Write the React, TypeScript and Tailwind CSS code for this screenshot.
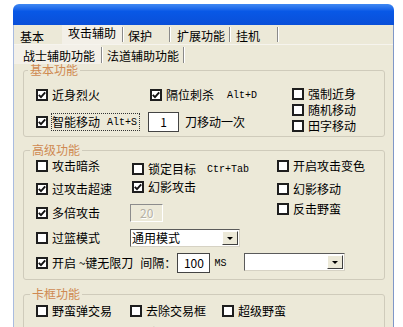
import React from 'react'

const MONO = "font-['Liberation_Mono',monospace]"

function Cb({ on }: { on?: boolean }) {
  return (
    <span className="w-[12px] h-[12px] border-2 border-[#1e1e1e] bg-white flex items-center justify-center shrink-0">
      {on && (
        <svg width="8" height="8" viewBox="0 0 8 8">
          <path d="M0.8 3.8 L3 6.2 L7.2 1.4" fill="none" stroke="#111" strokeWidth="1.9" />
        </svg>
      )}
    </span>
  )
}

function Item({ on, label, className = '', small }: { on?: boolean; label: string; className?: string; small?: boolean }) {
  return (
    <div className={`flex items-center gap-[4px] ${small ? 'h-[15px]' : 'h-[20px]'} ${className}`}>
      <Cb on={on} />
      <span className="leading-[14px] whitespace-nowrap">{label}</span>
    </div>
  )
}

function Sep({ h = 'h-[15px]' }: { h?: string }) {
  return <span className={`w-[2px] ${h} border-l border-l-[#8a8a8a] border-r border-r-white shrink-0`} />
}

function Combo({ text, className = '' }: { text?: string; className?: string }) {
  return (
    <div className={`flex items-center h-[18px] bg-white border border-t-[#5a5a5a] border-l-[#5a5a5a] border-r-[#d6d2c4] border-b-[#d6d2c4] ${className}`}>
      <span className="pl-[1px] leading-[14px] whitespace-nowrap">{text}</span>
      <span className="ml-auto mr-[1px] w-[16px] h-[14px] bg-[#ECE9D8] border border-t-white border-l-white border-r-[#404040] border-b-[#404040] flex items-center justify-center">
        <span className="border-x-[3px] border-x-transparent border-t-[3px] border-t-black" />
      </span>
    </div>
  )
}

export default function App() {
  return (
    <div className="w-[403px] h-[327px] overflow-hidden bg-white pl-[13px] pt-[4px] text-[12px] text-black font-['Noto_Sans_CJK_SC','Noto_Sans',sans-serif]">
      <div className="w-[381px] flex flex-col">
        {/* title bar */}
        <div className="h-[21px] rounded-t-[6px] bg-linear-to-b from-[#3f88f2] via-[#0858e6] via-35% to-[#0a4fd8]" />

        <div className="bg-[#ECE9D8] border-x border-l-[#a9bce0] border-r-[#7f97c8] h-[400px]">
          {/* tab row 1 */}
          <div className="flex items-center h-[19px]">
            <div className="w-[48px] pl-[6px] h-full flex items-center"><span className="translate-y-[1.5px] leading-[14px]">基本</span></div>
            <div className="w-[60px] pl-[6px] h-full flex items-center bg-[#f3f0e8]"><span className="-translate-y-[2px] leading-[14px]">攻击辅助</span></div>
            <Sep />
            <div className="w-[45px] pl-[4px] h-full flex items-center"><span className="translate-y-[1px] leading-[14px]">保护</span></div>
            <Sep />
            <div className="w-[58px] pl-[6px] h-full flex items-center"><span className="translate-y-[1px] leading-[14px]">扩展功能</span></div>
            <Sep />
            <div className="w-[46px] pl-[5px] h-full flex items-center"><span className="translate-y-[1px] leading-[14px]">挂机</span></div>
            <Sep />
          </div>

          {/* tab row 2 */}
          <div className="flex items-center h-[20px] border-t border-t-[#f6f4ee]">
            <div className="w-[87px] pl-[9px] h-full flex items-center bg-[#f3f0e8]"><span className="translate-y-[1px] leading-[14px]">战士辅助功能</span></div>
            <Sep h="h-[16px]" />
            <div className="w-[80px] pl-[4px] h-full flex items-center"><span className="translate-y-[1px] leading-[14px]">法道辅助功能</span></div>
            <Sep h="h-[16px]" />
          </div>

          {/* 基本功能 */}
          <fieldset className="ml-[9px] mr-[8px] border border-[#cfcbbb] rounded-[3px] pb-[3px]">
            <legend className="ml-[4px] px-[2px] leading-[12px] text-[#cf8a52]">基本功能</legend>
            <div className="flex pl-[12px]">
              <div className="w-[256px] flex flex-col pt-[9px] gap-[7px]">
                <div className="flex items-center h-[20px]">
                  <Item on label="近身烈火" className="w-[114px]" />
                  <Item on label="隔位刺杀" className="gap-[3px]" />
                  <span className={`${MONO} text-[10px] ml-[13px]`}>Alt+D</span>
                </div>
                <div className="flex items-center h-[20px]">
                  <Cb on />
                  <div className="ml-[3px] w-[89px] h-[18px] border border-dotted border-[#333] flex items-center">
                    <span className="leading-[14px]">智能移动</span>
                    <span className={`${MONO} text-[10px] ml-[7px]`}>Alt+S</span>
                  </div>
                  <div className="ml-[8px] w-[31px] h-[20px] bg-white border border-[#444] flex items-center justify-center leading-[14px]">1</div>
                  <span className="ml-[6px] leading-[14px]">刀移动一次</span>
                </div>
              </div>
              <div className="flex flex-col pt-[10px] gap-[1px]">
                <Item small label="强制近身" />
                <Item small label="随机移动" />
                <Item small label="田字移动" />
              </div>
            </div>
          </fieldset>

          {/* 高级功能 */}
          <fieldset className="mt-[7px] ml-[9px] mr-[8px] border border-[#cfcbbb] rounded-[3px] pb-[6px]">
            <legend className="ml-[6px] px-[2px] leading-[12px] text-[#cf8a52]">高级功能</legend>
            <div className="pl-[12px]">
              <div className="flex">
                <div className="w-[241px] flex flex-col">
                  <div className="flex items-center h-[20px]">
                    <Item label="攻击暗杀" className="w-[96px]" />
                    <Item label="锁定目标" className="translate-y-[3px]" />
                    <span className={`${MONO} text-[10px] ml-[11px] translate-y-[3px]`}>Ctr+Tab</span>
                  </div>
                  <div className="flex items-center h-[20px] mt-[3px]">
                    <Item on label="过攻击超速" className="w-[96px]" />
                    <Item on label="幻影攻击" className="-translate-y-[2px]" />
                  </div>
                  <div className="flex items-center h-[20px] mt-[4px]">
                    <Item on label="多倍攻击" className="w-[94px]" />
                    <div className="w-[33px] h-[18px] bg-[#ECE9D8] border border-t-[#8c8c8c] border-l-[#8c8c8c] border-r-white border-b-white pl-[9px] flex items-center leading-[14px] text-[#b4b1a6] [text-shadow:1px_1px_0_#fff]">20</div>
                  </div>
                  <div className="flex items-center h-[20px] mt-[5px]">
                    <Item label="过篮模式" className="w-[94px]" />
                    <Combo text="通用模式" className="w-[110px]" />
                  </div>
                </div>
                <div className="flex flex-col">
                  <Item label="开启攻击变色" />
                  <Item label="幻影移动" className="mt-[3px]" />
                  <Item label="反击野蛮" />
                </div>
              </div>
              <div className="flex items-center h-[20px] mt-[5px]">
                <Item on label="开启 ~键无限刀" />
                <span className="ml-[7px] leading-[14px]">间隔：</span>
                <div className="ml-[1px] w-[33px] h-[20px] bg-white border border-[#444] flex items-center justify-center leading-[14px]">100</div>
                <span className={`${MONO} text-[10px] ml-[4px]`}>MS</span>
                <Combo className="ml-[18px] w-[101px] -translate-y-[1px]" />
              </div>
            </div>
          </fieldset>

          {/* 卡框功能 */}
          <fieldset className="mt-[8px] ml-[9px] mr-[8px] border border-[#cfcbbb] rounded-[3px] pb-[6px]">
            <legend className="ml-[6px] px-[2px] leading-[12px] text-[#cf8a52]">卡框功能</legend>
            <div className="pl-[12px] pt-[1px] flex flex-col gap-[2px]">
              <div className="flex items-center h-[20px]">
                <Item label="野蛮弹交易" className="w-[94px]" />
                <Item label="去除交易框" className="w-[92px]" />
                <Item label="超级野蛮" />
              </div>
              <div className="flex items-center h-[20px]">
                <Item label="自动卡框" className="w-[94px]" />
                <Item label="防止掉线" className="w-[92px]" />
                <Item label="武卖不限等级" />
              </div>
            </div>
          </fieldset>
        </div>
      </div>
    </div>
  )
}
